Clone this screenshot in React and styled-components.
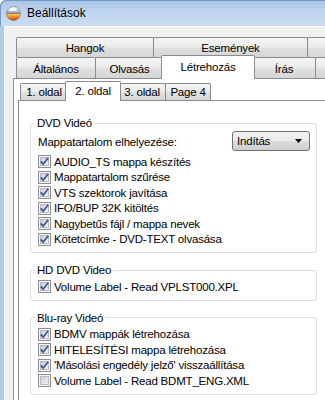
import React from 'react'
import styled, { createGlobalStyle } from 'styled-components'

const GlobalStyle = createGlobalStyle`
  body {
    margin: 0;
    overflow: hidden;
    background: #ffffff;
    font-family: "Liberation Sans", Arial, sans-serif;
    font-size: 11.5px;
    letter-spacing: -0.2px;
    color: #000;
  }
`

const mainTabs = [
  [
    { label: 'Hangok', w: 138 },
    { label: 'Események', w: 155 },
    { label: '', w: 60 },
  ],
  [
    { label: 'Általános', w: 80 },
    { label: 'Olvasás', w: 69 },
    { label: 'Létrehozás', w: 90, active: true },
    { label: 'Írás', w: 64 },
    { label: '', w: 60 },
  ],
]

const subTabs = [
  { label: '1. oldal', w: 48 },
  { label: '2. oldal', w: 52, active: true },
  { label: '3. oldal', w: 48 },
  { label: 'Page 4', w: 46 },
]

const dvdOptions = [
  'AUDIO_TS mappa készítés',
  'Mappatartalom szűrése',
  'VTS szektorok javítása',
  'IFO/BUP 32K kitöltés',
  'Nagybetűs fájl / mappa nevek',
  'Kötetcímke - DVD-TEXT olvasása',
]

const bluRayOptions = [
  { label: 'BDMV mappák létrehozása', checked: true },
  { label: 'HITELESÍTÉSI mappa létrehozása', checked: true },
  { label: "'Másolási engedély jelző' visszaállítása", checked: true },
  { label: 'Volume Label - Read BDMT_ENG.XML', checked: false },
]

function AppIcon() {
  return (
    <svg width="15" height="15" viewBox="0 0 15 15">
      <defs>
        <linearGradient id="ball" x1="0" y1="0" x2="0" y2="1">
          <stop offset="0" stopColor="#fafafa" />
          <stop offset="0.3" stopColor="#c9cbce" />
          <stop offset="0.52" stopColor="#7c7f85" />
          <stop offset="0.56" stopColor="#f8c840" />
          <stop offset="0.78" stopColor="#ee7d1f" />
          <stop offset="1" stopColor="#c2381a" />
        </linearGradient>
      </defs>
      <circle cx="7.5" cy="7.5" r="7" fill="url(#ball)" stroke="#74767a" strokeWidth="0.6" />
      <ellipse cx="6.8" cy="3.4" rx="3.4" ry="1.6" fill="#ffffff" opacity="0.8" />
    </svg>
  )
}

function CheckBox({ checked }) {
  return (
    <svg width="13" height="13" viewBox="0 0 13 13">
      <defs>
        <linearGradient id="cbInner" x1="0" y1="0" x2="1" y2="1">
          <stop offset="0" stopColor="#c9cdd3" />
          <stop offset="1" stopColor="#f5f5f6" />
        </linearGradient>
      </defs>
      <rect x="0.5" y="0.5" width="12" height="12" fill="#f6f6f6" stroke="#8e8f8f" />
      <rect x="2.5" y="2.5" width="8" height="8" fill="url(#cbInner)" stroke="#b9bdc3" />
      {checked && (
        <path d="M2.8 6.4 L5.2 9.2 L10.2 2.8" fill="none" stroke="#40559a" strokeWidth="1.8" />
      )}
    </svg>
  )
}

function Option({ label, checked = true }) {
  return (
    <OptionRow>
      <CheckBox checked={checked} />
      <span>{label}</span>
    </OptionRow>
  )
}

export default function App() {
  return (
    <>
      <GlobalStyle />
      <Window>
        <TitleBar>
          <AppIcon />
          <Title>Beállítások</Title>
        </TitleBar>
        <Frame>
          <Client>
            <TabControl>
              {mainTabs.map((row, i) => (
                <TabRow key={i} $h={i === 0 ? 20 : 21}>
                  {row.map((t, j) => (
                    <Tab key={j} $w={t.w} $active={t.active}>
                      {t.label}
                    </Tab>
                  ))}
                </TabRow>
              ))}
              <TabPane>
                <SubTabRow>
                  {subTabs.map((t) => (
                    <SubTab key={t.label} $w={t.w} $active={t.active}>
                      {t.label}
                    </SubTab>
                  ))}
                </SubTabRow>
                <SubPane>
                  <GroupBox>
                    <Caption>DVD Videó</Caption>
                    <ComboRow>
                      <span>Mappatartalom elhelyezése:</span>
                      <Combo>
                        <span>Indítás</span>
                        <svg width="7" height="4" viewBox="0 0 7 4">
                          <polygon points="0,0 7,0 3.5,4" fill="#000" />
                        </svg>
                      </Combo>
                    </ComboRow>
                    {dvdOptions.map((o) => (
                      <Option key={o} label={o} />
                    ))}
                  </GroupBox>
                  <GroupBox>
                    <Caption>HD DVD Video</Caption>
                    <Option label="Volume Label - Read VPLST000.XPL" />
                  </GroupBox>
                  <GroupBox>
                    <Caption>Blu-ray Videó</Caption>
                    {bluRayOptions.map((o) => (
                      <Option key={o.label} label={o.label} checked={o.checked} />
                    ))}
                  </GroupBox>
                </SubPane>
              </TabPane>
            </TabControl>
          </Client>
        </Frame>
      </Window>
    </>
  )
}

const Window = styled.div`
  width: 345px;
  height: 412px;
  display: flex;
  flex-direction: column;
`

const TitleBar = styled.div`
  height: 26px;
  flex-shrink: 0;
  display: flex;
  align-items: center;
  gap: 6px;
  padding-left: 6px;
  background: linear-gradient(to bottom, #a9c4e6 0%, #bfd4ee 45%, #cadcf1 100%);
  border-top-left-radius: 6px;
  box-shadow: inset 1px 1px 0 #7898c0;
`

const Title = styled.span`
  font-size: 12px;
  letter-spacing: 0;
  color: #000;
  padding-bottom: 1px;
`

const Frame = styled.div`
  flex: 1;
  display: flex;
  padding-left: 4px;
  background: linear-gradient(to right, #b3cbe8, #cadcf1);
`

const Client = styled.div`
  flex: 1;
  display: flex;
  flex-direction: column;
  background: #f0f0f0;
  border-left: 1px solid #f6f8fb;
  border-top: 1px solid #f8fafc;
  padding: 10px 0 0 8px;
`

const TabControl = styled.div`
  width: 320px;
  flex: 1;
  display: flex;
  flex-direction: column;
`

const TabRow = styled.div`
  height: ${(p) => p.$h}px;
  display: flex;
  padding-left: 3px;
`

const tabFace = `
  box-sizing: border-box;
  flex-shrink: 0;
  display: flex;
  align-items: center;
  justify-content: center;
  white-space: nowrap;
  border: 1px solid #898c95;
  border-bottom: none;
  border-radius: 2px 2px 0 0;
  background: linear-gradient(to bottom, #f4f4f4 0%, #ececec 45%, #dfdfdf 55%, #d6d6d6 100%);
`

const Tab = styled.div`
  ${tabFace}
  width: ${(p) => p.$w + (p.$active ? 4 : 0)}px;
  height: ${(p) => (p.$active ? 'calc(100% + 3px)' : '100%')};
  margin: ${(p) => (p.$active ? '-2px -3px 0 -2px' : '0 -1px 0 0')};
  padding-top: ${(p) => (p.$active ? 0 : 1)}px;
  padding-bottom: ${(p) => (p.$active ? 2 : 0)}px;
  position: relative;
  z-index: ${(p) => (p.$active ? 2 : 1)};
  ${(p) => p.$active && 'background: #ffffff;'}
`

const TabPane = styled.div`
  flex: 1;
  display: flex;
  flex-direction: column;
  border: 1px solid #898c95;
  background: #ffffff;
  padding: 4px 4px 0 4px;
`

const SubTabRow = styled.div`
  height: 17px;
  display: flex;
  padding-left: 2px;
`

const SubTab = styled.div`
  ${tabFace}
  width: ${(p) => p.$w + (p.$active ? 4 : 0)}px;
  height: ${(p) => (p.$active ? '20px' : '17px')};
  margin: ${(p) => (p.$active ? '-2px -3px 0 -2px' : '0 -1px 0 0')};
  padding-bottom: ${(p) => (p.$active ? 2 : 0)}px;
  position: relative;
  z-index: ${(p) => (p.$active ? 2 : 1)};
  ${(p) => p.$active && 'background: #ffffff;'}
`

const SubPane = styled.div`
  flex: 1;
  border: 1px solid #898c95;
  background: #ffffff;
  padding: 15px 10px 0 11px;
`

const GroupBox = styled.fieldset`
  margin: 0 0 10px;
  min-width: 0;
  padding: 2px 6px 5px 7px;
  border: 1px solid #d5dfe5;
  border-radius: 3px;
`

const Caption = styled.legend`
  padding: 0 2px;
  margin-left: -3px;
  line-height: 14px;
`

const ComboRow = styled.div`
  height: 21px;
  margin: -1px 0 2px;
  display: flex;
  align-items: center;
  justify-content: space-between;
`

const Combo = styled.div`
  box-sizing: border-box;
  width: 78px;
  height: 20px;
  margin-top: -1px;
  display: flex;
  align-items: center;
  justify-content: space-between;
  padding: 0 7px 0 4px;
  border: 1px solid #707070;
  border-radius: 3px;
  background: linear-gradient(to bottom, #f2f2f2 0%, #ebebeb 50%, #dddddd 51%, #cfcfcf 100%);
`

const OptionRow = styled.div`
  height: 15.5px;
  display: flex;
  align-items: center;
  gap: 3px;
  white-space: nowrap;
`
